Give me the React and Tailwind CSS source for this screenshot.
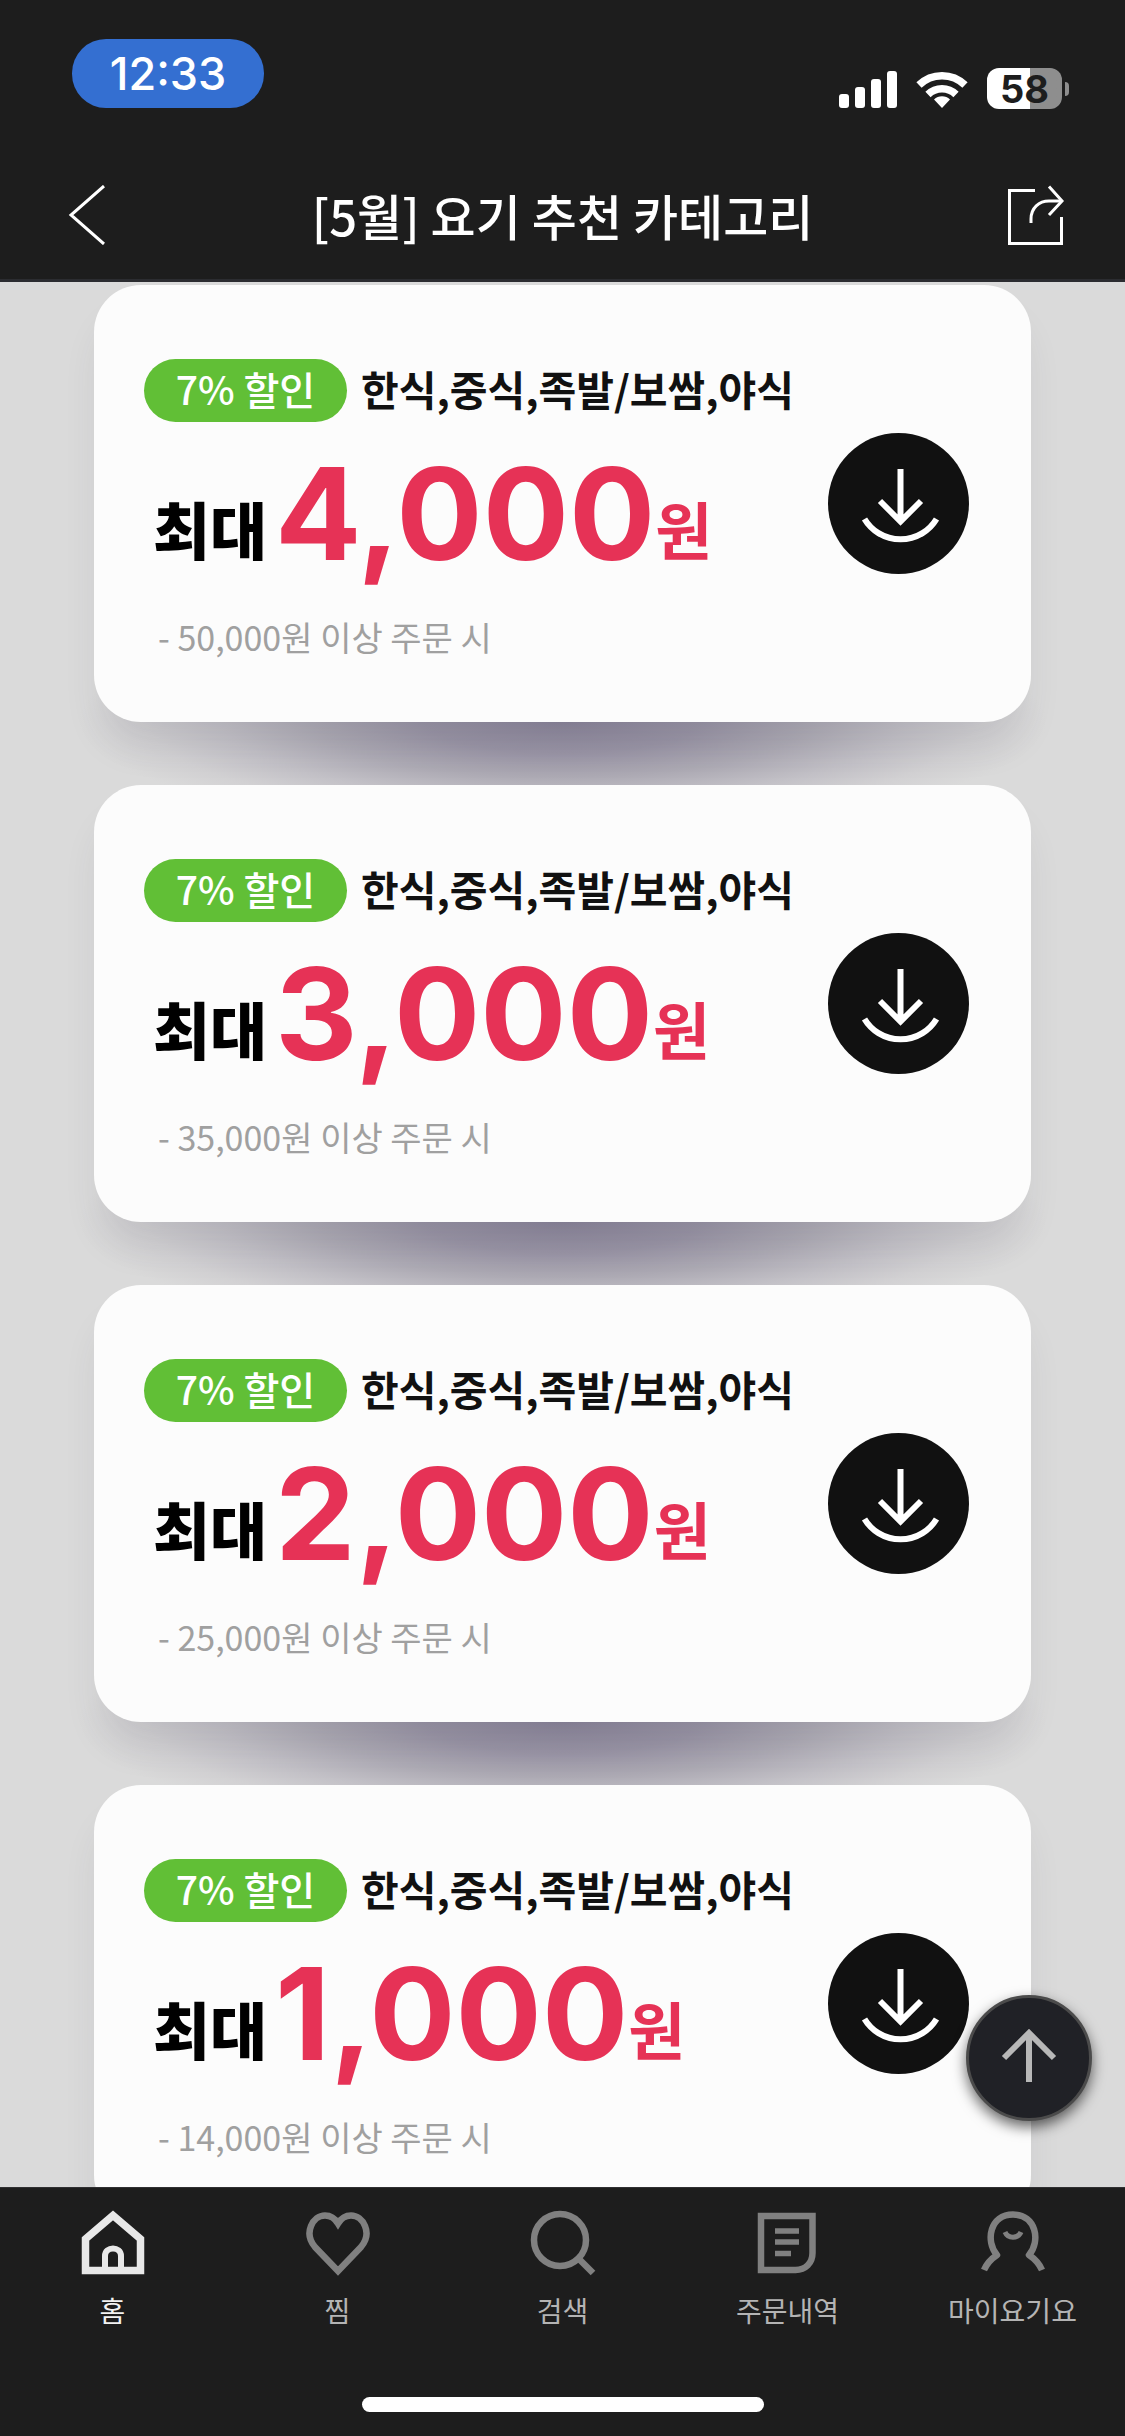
import { useState } from "react";

const COUPONS = [
  { amount: "4,000", minimum: "50,000" },
  { amount: "3,000", minimum: "35,000" },
  { amount: "2,000", minimum: "25,000" },
  { amount: "1,000", minimum: "14,000" },
];

const TABS = [
  { id: "home", label: "홈", Icon: HomeIcon },
  { id: "wish", label: "찜", Icon: HeartIcon },
  { id: "search", label: "검색", Icon: SearchIcon },
  { id: "orders", label: "주문내역", Icon: OrdersIcon },
  { id: "my", label: "마이요기요", Icon: ProfileIcon },
];

function App() {
  const [tab, setTab] = useState("home");

  return (
    <div className="flex h-screen flex-col bg-[#1d1d1d] font-['Noto_Sans_CJK_KR',sans-serif]">
      <StatusBar />

      {/* HEADER */}
      <header className="flex h-[140px] items-center justify-between border-b-3 border-[#2b2c30] px-[60px] pt-2 text-white">
        <button type="button" aria-label="뒤로" className="flex w-[57px] justify-start pl-2">
          <BackIcon />
        </button>
        <h1 className="text-[49px] leading-[60px] font-medium">[5월] 요기 추천 카테고리</h1>
        <button type="button" aria-label="공유" className="flex w-[57px] justify-end">
          <ShareIcon />
        </button>
      </header>

      {/* COUPONS */}
      <div className="relative min-h-0 flex-1">
        <main className="h-full overflow-y-auto bg-[#dadada] px-[94px] pt-[3px] pb-16 [scrollbar-width:none]">
          <ul className="flex flex-col gap-[63px]">
            {COUPONS.map((coupon) => (
              <CouponCard key={coupon.amount} coupon={coupon} />
            ))}
          </ul>
        </main>
        <button
          type="button"
          aria-label="맨 위로"
          className="absolute right-[33px] bottom-[66px] flex size-[126px] items-center justify-center rounded-full border-3 border-[#4b4b4b] bg-[#202126] shadow-[0_6px_14px_rgba(0,0,0,0.6)]"
        >
          <svg viewBox="0 0 126 126" className="size-[126px] shrink-0" fill="none" stroke="#b8b8b8" strokeWidth="6">
            <path d="M63 87V38M38 63l25-25 25 25" />
          </svg>
        </button>
      </div>

      {/* BOTTOM TABS */}
      <nav className="border-t border-[#303032] pt-[22px] pb-6">
        <div className="grid grid-cols-5">
          {TABS.map(({ id, label, Icon }) => (
            <button
              key={id}
              type="button"
              onClick={() => setTab(id)}
              className={`flex flex-col items-center gap-3.5 ${tab === id ? "text-[#e8e8e8]" : "text-[#808080]"}`}
            >
              <Icon />
              <span className={`text-[28px] leading-[40px] ${tab === id ? "text-[#f2f2f2]" : "text-[#b4b4b4]"}`}>
                {label}
              </span>
            </button>
          ))}
        </div>
        <div className="mx-auto mt-[67px] h-[15px] w-[402px] rounded-full bg-white" />
      </nav>
    </div>
  );
}

/* ================= STATUS BAR ================= */

function StatusBar() {
  return (
    <div className="flex h-[142px] items-start justify-between pt-[39px] pr-14 pl-[72px] font-[Inter,sans-serif]">
      <div className="flex h-[69px] w-[192px] items-center justify-center rounded-[34px] bg-[#346fd1] text-[45px] font-medium text-white">
        12:33
      </div>
      <div className="flex items-center gap-[19px] pt-[29px]">
        <svg viewBox="0 0 58 38" className="h-[38px] w-[58px]" fill="#fff">
          <rect x="0" y="24" width="10" height="14" rx="3" />
          <rect x="16" y="17" width="10" height="21" rx="3" />
          <rect x="32" y="9" width="10" height="29" rx="3" />
          <rect x="48" y="1" width="10" height="37" rx="3" />
        </svg>
        <svg viewBox="0 0 52 38" className="h-[38px] w-[52px]" fill="none" stroke="#fff" strokeWidth="7.5">
          <path d="M3 15a33 33 0 0 1 46 0" />
          <path d="M12 24.500a20 20 0 0 1 28 0" />
          <path d="M26 38l-8-8.500a11.500 11.500 0 0 1 16 0z" fill="#fff" stroke="none" />
        </svg>
        <div className="flex items-center gap-[3px]">
          <div className="flex h-[41px] w-[75px] items-center justify-center rounded-xl bg-linear-to-r from-white from-57% to-[#8e8e8e] to-57% text-[38px] leading-none font-bold text-[#1d1d1d]">
            58
          </div>
          <div className="h-[14px] w-[4px] rounded-r-full bg-[#8e8e8e]" />
        </div>
      </div>
    </div>
  );
}

/* ================= COUPON CARD ================= */

function CouponCard({ coupon }) {
  return (
    <li className="relative isolate">
      {/* Soft purple shadow under the card */}
      <div className="absolute -inset-x-4 -bottom-[110px] -z-10 h-[220px] bg-[radial-gradient(closest-side,#8b859a_0%,#9994a5_28%,#adaab4_50%,#c3c1c7_70%,#d2d1d3_86%,transparent_100%)]" />

      <div className="flex items-center justify-between rounded-[47px] bg-[#fcfcfc] pt-[74px] pr-[62px] pb-[59px] pl-[50px] shadow-[0_30px_40px_-10px_rgba(60,55,75,0.12)]">
        <div>
          <div className="flex h-[63px] items-center gap-[14px]">
            <span className="flex h-[63px] w-[203px] items-center justify-center rounded-full bg-[#61bf36] pb-1 text-[39px] leading-none font-medium text-white">
              7% 할인
            </span>
            <span className="pb-1 text-[41px] leading-none font-bold text-[#111]">한식,중식,족발/보쌈,야식</span>
          </div>
          <p className="mt-7 flex items-end pl-[9px] leading-none text-[#e63256]">
            <span className="pr-2 text-[62px] leading-[100px] font-black text-black">최대</span>
            <strong className="font-[Inter,sans-serif] text-[128px] leading-none font-[660]">{coupon.amount}</strong>
            <span className="text-[62px] leading-[100px] font-bold">원</span>
          </p>
          <p className="mt-[33px] pl-[14px] text-[34px] leading-[52px] text-[#a0a0a0]">
            - {coupon.minimum}원 이상 주문 시
          </p>
        </div>

        <button type="button" aria-label="쿠폰 받기" className="mb-[15px] size-[141px] shrink-0 rounded-full bg-[#111]">
          <svg viewBox="0 0 141 141" className="size-[141px]" fill="none" stroke="#fff" strokeWidth="6">
            <path d="M72.500 36v52M52 68l20.500 20.500L93 68" />
            <path d="M36.500 86a42 42 0 0 0 72 0" />
          </svg>
        </button>
      </div>
    </li>
  );
}

/* ================= ICONS ================= */

function BackIcon() {
  return (
    <svg viewBox="0 0 38 60" className="h-[60px] w-[38px]" fill="none" stroke="currentColor" strokeWidth="3">
      <path d="M36 1L3 30l33 29" />
    </svg>
  );
}

function ShareIcon() {
  return (
    <svg viewBox="0 0 60 60" className="size-[60px] shrink-0" fill="none" stroke="currentColor" strokeWidth="3">
      <path d="M30 5.500H4.500v53h52V32" />
      <path d="M26 38v-4c0-11 8-18 18-18h12" />
      <path d="M44 1.500L57 16 44 30" />
    </svg>
  );
}

function HomeIcon() {
  return (
    <svg viewBox="0 0 66 66" className="size-[66px]" fill="none" stroke="currentColor">
      <path d="M5.500 60.500V29L33 5.500 60.500 29v31.500z" strokeWidth="7.5" />
      <path d="M25 59V46c0-10 16-10 16 0v13" strokeWidth="6" />
    </svg>
  );
}

function HeartIcon() {
  return (
    <svg viewBox="0 0 66 66" className="size-[66px]" fill="none" stroke="currentColor" strokeWidth="6.5">
      <path d="M33 61L10 37C-2 23 8 5.500 20 5.500c6 0 10 3 13 8 3-5 7-8 13-8 12 0 22 17.500 10 31.500z" />
    </svg>
  );
}

function SearchIcon() {
  return (
    <svg viewBox="0 0 66 66" className="size-[66px]" fill="none" stroke="currentColor" strokeWidth="6.5">
      <circle cx="30" cy="30" r="26" />
      <path d="M48 48l15 15" />
    </svg>
  );
}

function OrdersIcon() {
  return (
    <svg viewBox="0 0 66 66" className="size-[66px]" fill="none" stroke="currentColor" strokeWidth="6.5">
      <path d="M6 6h51.500v37c0 10-7 17-17 17H6z" />
      <path d="M20 21h24M20 32h24M20 43.500h16" strokeWidth="5.5" />
    </svg>
  );
}

function ProfileIcon() {
  return (
    <svg viewBox="0 0 66 66" className="size-[66px]" fill="none" stroke="currentColor" strokeWidth="6.5">
      <path d="M4 60c3-7 7-11 13-15C5 31 10 4.500 33 4.500S61 31 49 45c6 4 10 8 13 15" strokeLinejoin="round" />
      <path d="M25 22c3 7 13 7 16 0" strokeWidth="5" />
    </svg>
  );
}

export default App;
